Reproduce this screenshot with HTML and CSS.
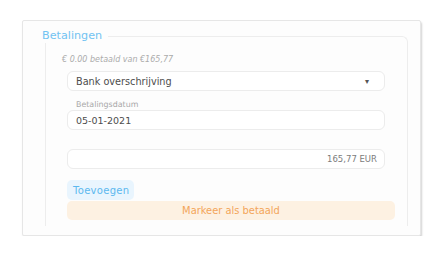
FILE: index.html
```html
<!DOCTYPE html>
<html>
<head>
<meta charset="utf-8">
<link rel="stylesheet" href="styles.css">
</head>
<body>
<div class="card">
  <fieldset class="group">
    <legend class="group-title">Betalingen</legend>
    <div class="note">€ 0.00 betaald van €165,77</div>
    <div class="field select">
      <span>Bank overschrijving</span>
      <span class="arrow">▾</span>
    </div>
    <div class="label">Betalingsdatum</div>
    <div class="field date">05-01-2021</div>
    <div class="field amount">165,77 EUR</div>
    <div class="actions">
      <span class="btn-add">Toevoegen</span>
    </div>
    <div class="btn-paid">Markeer als betaald</div>
  </fieldset>
</div>
</body>
</html>
```

FILE: styles.css
```css
html, body {
  margin: 0;
  padding: 0;
  background: #ffffff;
}
body {
  font-family: "DejaVu Sans", "Noto Sans", sans-serif;
  padding: 20px 0 0 22px;
}
.card {
  width: 397px;
  height: 206px;
  background: #fdfdfd;
  border: 1px solid #e6e6e6;
  border-radius: 2px;
  box-shadow: 1px 2px 2px rgba(0,0,0,0.18);
  padding-top: 8px;
  box-sizing: content-box;
}
.group {
  margin: 0 12px 0 22px;
  padding: 0;
  height: 197px;
  border: 1px solid #ededed;
  border-bottom: none;
  border-radius: 0 6px 0 0;
  box-sizing: border-box;
}
.group-title {
  margin-left: -4px;
  padding: 0 6px 0 0;
  font-size: 11.2px;
  color: #72c3f2;
  line-height: 14px;
}
.note {
  margin: 12px 0 0 16px;
  font-size: 8px;
  font-style: italic;
  color: #ababab;
  line-height: 10px;
}
.field {
  margin: 0 22px 0 21px;
  height: 20px;
  border: 1px solid #ececec;
  border-radius: 6px;
  background: #ffffff;
  box-sizing: border-box;
  display: flex;
  align-items: center;
  padding: 0 8px;
  font-size: 9.7px;
  color: #4d4d4d;
}
.select {
  margin-top: 6px;
  justify-content: space-between;
}
.arrow {
  font-size: 8px;
  color: #555;
  margin-right: 7px;
}
.date {
  font-size: 9.5px;
}
.label {
  margin: 9px 0 0 30px;
  font-size: 7.9px;
  color: #a8a8a8;
  line-height: 10px;
}
.amount {
  margin-top: 19px;
  justify-content: flex-end;
  font-size: 8.5px;
  color: #7c7c7c;
  padding-right: 7px;
}
.actions {
  margin: 11px 0 0 21px;
  display: flex;
}
.btn-add {
  height: 20px;
  padding: 0 5px 0 6px;
  display: flex;
  align-items: center;
  background: #e9f5fe;
  border-radius: 5px;
  color: #5cb8ef;
  font-size: 10px;
  letter-spacing: 0.3px;
}
.btn-paid {
  margin: 1px 12px 0 21px;
  height: 19px;
  display: flex;
  align-items: center;
  justify-content: center;
  background: #fdf1e2;
  border-radius: 5px;
  color: #f3a55a;
  font-size: 9.9px;
}
```
